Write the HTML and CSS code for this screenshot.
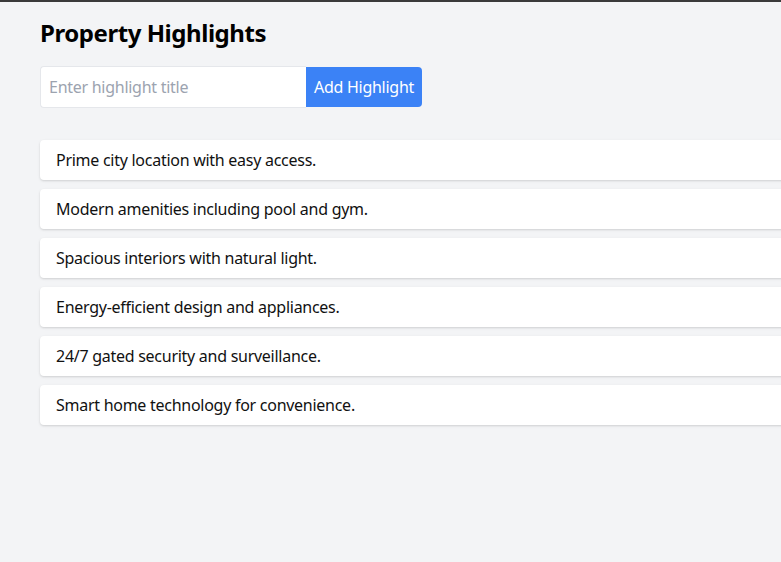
FILE: index.html
```html
<!DOCTYPE html>
<html>
  <head>
    <meta charset="utf-8" />
    <title>Property Highlights</title>
    <link rel="stylesheet" href="styles.css">
  </head>
  <body>
    <div class="page">
      <h1>Property Highlights</h1>
      <div class="addBar">
        <input type="text" name="title" placeholder="Enter highlight title"/>
        <button type="button">Add Highlight</button>
      </div>
      <ul class="highlights">
        <li>Prime city location with easy access.</li>
        <li>Modern amenities including pool and gym.</li>
        <li>Spacious interiors with natural light.</li>
        <li>Energy-efficient design and appliances.</li>
        <li>24/7 gated security and surveillance.</li>
        <li>Smart home technology for convenience.</li>
      </ul>
    </div>
  </body>
</html>
```

FILE: styles.css
```css
html {
  background-color: #f3f4f6;
  color: #111;
  font-family: "Noto Sans", "Open Sans", sans-serif;
  letter-spacing: -0.27px;
  overflow-x: hidden;
}

body {
  margin: 0;
  border-top: 2px solid #3a3a3a;
  min-height: 560px;
}

.page {
  padding: 15px 0 0 40px;
  width: 960px;
}

h1 {
  font-size: 24px;
  line-height: 32px;
  font-weight: 700;
  letter-spacing: -0.45px;
  color: #000;
  margin: 0 0 17px 0;
}

.addBar {
  display: flex;
  margin-bottom: 32px;
}

.addBar input {
  width: 266px;
  height: 42px;
  box-sizing: border-box;
  border: 1px solid #e5e7eb;
  border-right: none;
  border-radius: 4px 0 0 4px;
  padding: 0 8px;
  font: inherit;
  font-size: 16px;
  letter-spacing: -0.27px;
  color: #111;
  background: white;
  outline: none;
}

.addBar input::placeholder {
  color: #9ca3af;
}

.addBar button {
  margin-top: 1px;
  height: 40px;
  padding: 0 8px;
  border: none;
  border-radius: 0 4px 4px 0;
  background-color: #3b82f6;
  color: white;
  font: inherit;
  font-size: 16px;
  letter-spacing: -0.27px;
  cursor: pointer;
}

.highlights {
  list-style: none;
  margin: 0;
  padding: 0;
}

.highlights li {
  background: white;
  border-radius: 4px;
  box-shadow: 0 1px 3px rgba(0, 0, 0, 0.1), 0 1px 2px rgba(0, 0, 0, 0.06);
  padding: 8px 16px;
  line-height: 24px;
  font-size: 16px;
  margin-bottom: 9px;
}
```
